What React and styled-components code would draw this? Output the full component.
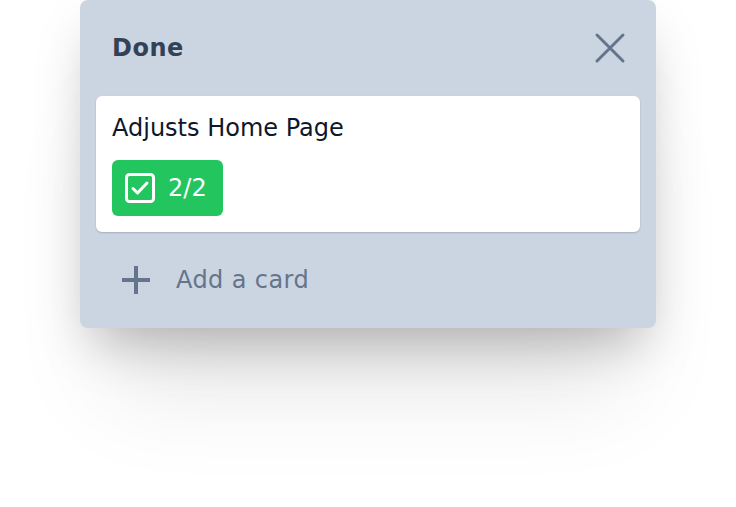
import { createGlobalStyle, styled } from "styled-components"

const GlobalStyle = createGlobalStyle`
  body {
    margin: 0;
    background: #ffffff;
    font-family: "DejaVu Sans", "Open Sans", sans-serif;
  }
`

const Page = styled.div`
  width: 736px;
  height: 507px;
  overflow: hidden;
  padding-left: 80px;
  box-sizing: border-box;
`

const Column = styled.section`
  width: 576px;
  box-sizing: border-box;
  padding: 16px;
  background: #cbd5e1;
  border-radius: 8px;
  box-shadow: 0 25px 50px -12px rgba(0, 0, 0, 0.25), 0 90px 100px -30px rgba(0, 0, 0, 0.1);
  display: flex;
  flex-direction: column;
`

const Header = styled.header`
  height: 64px;
  margin-bottom: 16px;
  padding: 0 14px 0 16px;
  display: flex;
  align-items: center;
  justify-content: space-between;
`

const Title = styled.h2`
  margin: 0;
  font-size: 24px;
  font-weight: 700;
  letter-spacing: 0.5px;
  color: #334155;
`

const IconButton = styled.button`
  border: none;
  background: none;
  padding: 0;
  width: 32px;
  height: 32px;
  display: flex;
  align-items: center;
  justify-content: center;
  color: #64748b;
  cursor: pointer;
`

const Card = styled.article`
  background: #fff;
  border-radius: 6px;
  padding: 16px;
  box-shadow: 0 1px 2px rgba(15, 23, 42, 0.2);
  display: flex;
  flex-direction: column;
  gap: 16px;
  align-items: flex-start;
`

const CardTitle = styled.div`
  font-size: 24px;
  line-height: 32px;
  color: #0f172a;
`

const Badge = styled.div`
  height: 56px;
  padding: 0 16px 0 13px;
  box-sizing: border-box;
  border-radius: 6px;
  background: ${p => (p.$done ? "#22c55e" : "#94a3b8")};
  color: #fff;
  display: flex;
  align-items: center;
  gap: 13px;
  font-size: 24px;
`

const AddRow = styled.button`
  margin-top: 16px;
  height: 64px;
  border: none;
  background: none;
  padding: 0 16px;
  display: flex;
  align-items: center;
  gap: 16px;
  font-family: inherit;
  font-size: 24px;
  letter-spacing: 0.4px;
  color: #64748b;
  cursor: pointer;
`

const CloseIcon = () => (
  <svg width="32" height="32" viewBox="0 0 32 32" fill="none" stroke="currentColor" strokeWidth="3" strokeLinecap="round">
    <path d="M3 3L29 29M29 3L3 29" />
  </svg>
)

const CheckIcon = () => (
  <svg width="30" height="30" viewBox="0 0 30 30" fill="none" stroke="#fff" strokeWidth="3">
    <rect x="1.5" y="1.5" width="27" height="27" rx="3" />
    <path d="M8 15.5l4.5 4.5L22 10" strokeLinecap="round" strokeLinejoin="round" />
  </svg>
)

const PlusIcon = () => (
  <svg width="48" height="48" viewBox="0 0 48 48" fill="none" stroke="#64748b" strokeWidth="4">
    <path d="M24 10v28M10 24h28" />
  </svg>
)

const App = () => {
  const card = { title: "Adjusts Home Page", done: 2, total: 2 }

  return (
    <Page>
      <GlobalStyle />
      <Column>
        <Header>
          <Title>Done</Title>
          <IconButton aria-label="Close">
            <CloseIcon />
          </IconButton>
        </Header>
        <Card>
          <CardTitle>{card.title}</CardTitle>
          <Badge $done={card.done === card.total}>
            <CheckIcon />
            <span>{card.done}/{card.total}</span>
          </Badge>
        </Card>
        <AddRow>
          <PlusIcon />
          Add a card
        </AddRow>
      </Column>
    </Page>
  )
}

export default App
